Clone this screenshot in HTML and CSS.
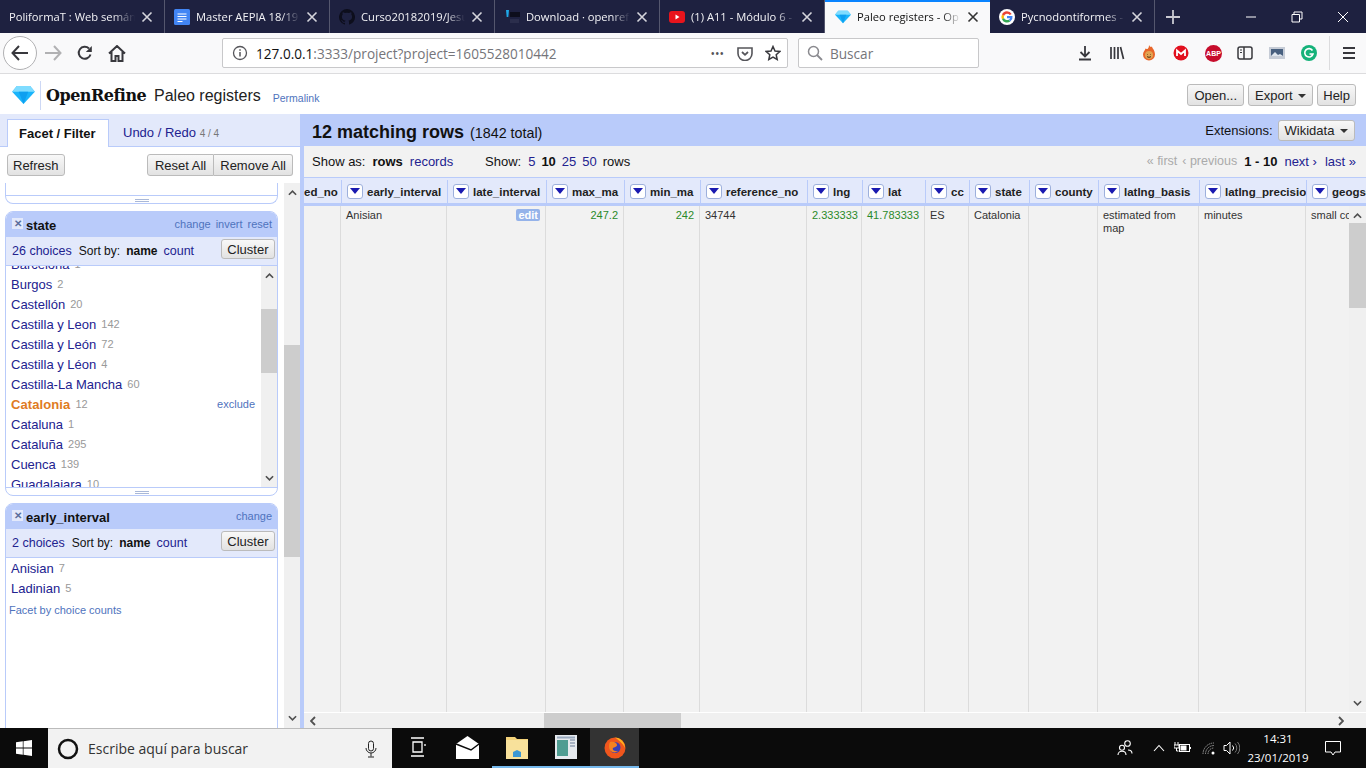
FILE: index.html
```html
<!DOCTYPE html>
<html lang="es">
<head>
    <meta charset="UTF-8">
    <title>Paleo registers - OpenRefine</title>
    <link rel="stylesheet" href="styles.css">
</head>
<body>
    <svg class="defs" width="0" height="0">
        <symbol id="gem" viewBox="0 0 24 19">
            <polygon points="5,0 19,0 24,6 12,19 0,6" fill="#19b4fb"/>
            <polygon points="5,0 19,0 24,6 0,6" fill="#7fdcff"/>
            <polygon points="7,6 17,6 12,19" fill="#0e9ff0"/>
        </symbol>
        <symbol id="x" viewBox="0 0 12 12">
            <path d="M1.5 1.5l9 9M10.5 1.5l-9 9" fill="none" stroke="currentColor" stroke-width="1.6"/>
        </symbol>
        <symbol id="up" viewBox="0 0 10 6">
            <path d="M1 5l4-4 4 4" fill="none" stroke="#505050" stroke-width="1.8"/>
        </symbol>
        <symbol id="down" viewBox="0 0 10 6">
            <path d="M1 1l4 4 4-4" fill="none" stroke="#505050" stroke-width="1.8"/>
        </symbol>
    </svg>

    <!-- firefox tabs -->
    <div class="tabstrip">
        <div class="tab">
            <span class="tab-title">PoliformaT : Web semán</span>
            <svg class="tab-close"><use href="#x"/></svg>
        </div>
        <div class="tab">
            <svg class="favicon" viewBox="0 0 16 16"><rect width="16" height="16" rx="1.5" fill="#4285f4"/><path d="M3.5 5h9M3.5 7.5h9M3.5 10h9M3.5 12.5h5" stroke="#fff" stroke-width="1"/></svg>
            <span class="tab-title">Master AEPIA 18/19</span>
            <svg class="tab-close"><use href="#x"/></svg>
        </div>
        <div class="tab">
            <svg class="favicon" viewBox="0 0 16 16"><path fill="#0d0e1c" d="M8 0a8 8 0 0 0-2.5 15.6c.4.1.5-.2.5-.4v-1.4c-2.2.5-2.7-1-2.7-1-.4-.9-.9-1.200-.9-1.200-.7-.5.100-.5.100-.5.800.1 1.200.8 1.200.8.700 1.200 1.900.9 2.300.7.100-.5.300-.9.500-1.100-1.800-.2-3.600-.9-3.600-4 0-.9.300-1.600.800-2.100-.1-.2-.4-1 .1-2.100 0 0 .7-.2 2.200.8a7.600 7.600 0 0 1 4 0c1.500-1 2.200-.8 2.200-.8.500 1.100.200 1.900.100 2.100.500.500.800 1.200.800 2.100 0 3.100-1.900 3.800-3.700 4 .3.300.600.700.600 1.500v2.200c0 .2.100.5.500.4A8 8 0 0 0 8 0z"/></svg>
            <span class="tab-title">Curso20182019/Jesú</span>
            <svg class="tab-close"><use href="#x"/></svg>
        </div>
        <div class="tab">
            <svg class="favicon" viewBox="0 0 16 16"><path d="M2 1h3l-.7 7H2.700z" fill="#1fa8e8"/><rect x="6" y="3" width="10" height="5" fill="#0d0e1c"/><rect x="6" y="10" width="9" height="4" fill="#2b2e4c"/></svg>
            <span class="tab-title">Download · openrefi</span>
            <svg class="tab-close"><use href="#x"/></svg>
        </div>
        <div class="tab">
            <svg class="favicon" viewBox="0 0 16 16"><rect y="2" width="16" height="12" rx="3" fill="#e8141c"/><path d="M6.500 5.500v5l4-2.500z" fill="#fff"/></svg>
            <span class="tab-title">(1) A11 - Módulo 6 -</span>
            <svg class="tab-close"><use href="#x"/></svg>
        </div>
        <div class="tab tab-active">
            <svg class="favicon"><use href="#gem"/></svg>
            <span class="tab-title">Paleo registers - Op</span>
            <svg class="tab-close"><use href="#x"/></svg>
        </div>
        <div class="tab">
            <svg class="favicon" viewBox="0 0 16 16"><circle cx="8" cy="8" r="8" fill="#fff"/><path d="M12.700 5A5.500 5.500 0 0 0 3 5.500l2 1.500A3.300 3.300 0 0 1 10.700 6z" fill="#ea4335"/><path d="M3 5.500a5.500 5.500 0 0 0 0 5l2-1.500a3.300 3.300 0 0 1 0-2z" fill="#fbbc05"/><path d="M3 10.500a5.500 5.500 0 0 0 8.500 1.700l-1.900-1.500A3.300 3.300 0 0 1 5 9z" fill="#34a853"/><path d="M13.500 7H8v2.200h3.100a2.800 2.800 0 0 1-1.500 1.500l1.900 1.500A5.500 5.500 0 0 0 13.500 7z" fill="#4285f4"/></svg>
            <span class="tab-title">Pycnodontiformes -</span>
            <svg class="tab-close"><use href="#x"/></svg>
        </div>
        <div class="tab-new">
            <svg width="16" height="16" viewBox="0 0 16 16"><path d="M8 1v14M1 8h14" stroke="#c9c9d2" stroke-width="1.800"/></svg>
        </div>
        <div class="window-controls">
            <svg width="12" height="12" viewBox="0 0 12 12"><path d="M1 6h10" stroke="#fff"/></svg>
            <svg width="12" height="12" viewBox="0 0 12 12"><path d="M3 3V1h8v7H9M1 3.500h7.500V11H1z" fill="none" stroke="#fff"/></svg>
            <svg width="12" height="12" viewBox="0 0 12 12"><path d="M1 1l10 10M11 1L1 11" stroke="#fff"/></svg>
        </div>
    </div>

    <!-- firefox toolbar -->
    <div class="toolbar">
        <div class="nav-back">
            <svg width="18" height="16" viewBox="0 0 18 16"><path d="M8 1L1.500 8 8 15M2 8h15" fill="none" stroke="#38383d" stroke-width="2"/></svg>
        </div>
        <svg class="nav-icon nav-forward" width="18" height="16" viewBox="0 0 18 16"><path d="M10 1l6.500 7L10 15M16 8H1" fill="none" stroke="#b1b1b3" stroke-width="2"/></svg>
        <svg class="nav-icon nav-reload" width="16" height="16" viewBox="0 0 16 16"><path d="M13.500 9.500A6 6 0 1 1 12 3.500" fill="none" stroke="#38383d" stroke-width="2"/><path d="M14.800 1v6h-6z" fill="#38383d"/></svg>
        <svg class="nav-icon" width="18" height="17" viewBox="0 0 18 17"><path d="M1 8.500L9 1l8 7.500M3.500 7v9h4v-5h3v5h4V7" fill="none" stroke="#38383d" stroke-width="2"/></svg>

        <div class="urlbar">
            <svg width="16" height="16" viewBox="0 0 16 16"><circle cx="8" cy="8" r="6.500" fill="none" stroke="#55555a" stroke-width="1.300"/><path d="M8 7v4.500M8 4.200v1.500" stroke="#55555a" stroke-width="1.500"/></svg>
            <div class="url"><span class="url-host">127.0.0.1</span>:3333/project?project=1605528010442</div>
            <span class="url-dots">•••</span>
            <svg class="url-pocket" width="16" height="15" viewBox="0 0 16 15"><path d="M1 2h14v5.500a7 7 0 0 1-14 0z" fill="none" stroke="#55555a" stroke-width="1.600"/><path d="M5 6l3 2.800L11 6" fill="none" stroke="#55555a" stroke-width="1.800"/></svg>
            <svg width="16" height="16" viewBox="0 0 16 16"><path d="M8 1.500l2 4.500 4.800.500-3.600 3.200 1 4.800L8 12.100l-4.200 2.400 1-4.800L1.200 6.500 6 6z" fill="none" stroke="#38383d" stroke-width="1.500"/></svg>
        </div>
        <div class="searchbar">
            <svg width="16" height="16" viewBox="0 0 16 16"><circle cx="6.500" cy="6.500" r="5" fill="none" stroke="#8a8a8f" stroke-width="1.500"/><path d="M10 10l5 5" stroke="#8a8a8f" stroke-width="1.800"/></svg>
            <span>Buscar</span>
        </div>

        <div class="toolbar-icons">
            <svg width="16" height="16" viewBox="0 0 16 16"><path d="M8 1v10M3.500 7L8 11.500 12.500 7M2 14.500h12" fill="none" stroke="#38383d" stroke-width="1.800"/></svg>
            <svg width="16" height="16" viewBox="0 0 16 16"><path d="M2 2v12M5.500 2v12M9 2v12M11.500 2l3 12" fill="none" stroke="#38383d" stroke-width="1.700"/></svg>
            <svg width="16" height="16" viewBox="0 0 16 16"><path d="M8 0c1 2 2 2.500 3 1.500.2 2 3 3.500 3 8a6 6 0 0 1-12 0c0-3 2-3.500 2.500-6C5.500 4 6 4 6.500 4 7.500 3 8 2 8 0z" fill="#e8662a"/><circle cx="8" cy="10" r="4" fill="#e2a452"/><path d="M6 9.500h.5M9.500 9.500h.5M6 11.500c1 1 3 1 4 0" stroke="#4a2a10" fill="none"/></svg>
            <svg width="16" height="16" viewBox="0 0 16 16"><circle cx="8" cy="8" r="7.500" fill="#e2101e"/><path d="M4 11V5.500l4 3.500 4-3.500V11" fill="none" stroke="#fff" stroke-width="1.800"/></svg>
            <div class="abp">ABP</div>
            <svg width="16" height="16" viewBox="0 0 16 16"><rect x="1" y="2" width="14" height="12" rx="2" fill="none" stroke="#38383d" stroke-width="1.500"/><path d="M7 2v12" stroke="#38383d" stroke-width="1.500"/><path d="M3 5h2M3 7.500h2" stroke="#38383d"/></svg>
            <svg width="16" height="14" viewBox="0 0 16 14"><rect width="16" height="12" y="1" fill="#c6ccd6"/><rect x="2" y="3" width="12" height="7" fill="#48607f"/><path d="M2 10l4-4 3 3 2-1 3 2z" fill="#dfe6ee"/></svg>
            <svg width="16" height="16" viewBox="0 0 16 16"><circle cx="8" cy="8" r="8" fill="#15b27a"/><path d="M11.500 5.500A4.200 4.200 0 1 0 12 9H8.500" fill="none" stroke="#fff" stroke-width="1.600"/></svg>
            <span class="toolbar-sep"></span>
            <svg width="14" height="14" viewBox="0 0 14 14"><path d="M1 2h12M1 7h12M1 12h12" stroke="#38383d" stroke-width="1.800"/></svg>
        </div>
    </div>

    <!-- openrefine header -->
    <div class="app-header">
        <svg class="app-logo"><use href="#gem"/></svg>
        <div class="app-name">OpenRefine</div>
        <div class="project-name">Paleo registers</div>
        <a class="permalink">Permalink</a>
        <div class="header-buttons">
            <button class="btn">Open...</button>
            <button class="btn">Export <span class="caret"></span></button>
            <button class="btn btn-help">Help</button>
        </div>
    </div>

    <div class="workspace">
        <!-- left panel -->
        <div class="left-panel">
            <div class="left-tabs">
                <div class="left-tab active">Facet / Filter</div>
                <div class="left-tab"><a>Undo / Redo</a> <span class="tab-count">4 / 4</span></div>
            </div>
            <div class="facet-controls">
                <button class="btn btn-refresh">Refresh</button>
                <div class="btn-group">
                    <button class="btn">Reset All</button>
                    <button class="btn">Remove All</button>
                </div>
            </div>
            <div class="facet-area">
                <div class="facet-list">
                    <div class="facet-stub">
                        <div class="facet-grip"></div>
                    </div>

                    <div class="facet">
                        <div class="facet-title">
                            <span class="facet-remove">✕</span>
                            <span class="facet-name">state</span>
                            <span class="facet-actions"><a>change</a><a>invert</a><a>reset</a></span>
                        </div>
                        <div class="facet-sort">
                            <a>26 choices</a><span>Sort by:</span><b>name</b><a>count</a>
                            <button class="btn btn-cluster">Cluster</button>
                        </div>
                        <div class="facet-body state-body">
                            <div class="choices state-choices">
                                <div class="choice"><a>Barcelona</a><span>1</span></div>
                                <div class="choice"><a>Burgos</a><span>2</span></div>
                                <div class="choice"><a>Castellón</a><span>20</span></div>
                                <div class="choice"><a>Castilla y Leon</a><span>142</span></div>
                                <div class="choice"><a>Castilla y León</a><span>72</span></div>
                                <div class="choice"><a>Castilla y Léon</a><span>4</span></div>
                                <div class="choice"><a>Castilla-La Mancha</a><span>60</span></div>
                                <div class="choice selected"><a>Catalonia</a><span>12</span><a class="exclude">exclude</a></div>
                                <div class="choice"><a>Cataluna</a><span>1</span></div>
                                <div class="choice"><a>Cataluña</a><span>295</span></div>
                                <div class="choice"><a>Cuenca</a><span>139</span></div>
                                <div class="choice"><a>Guadalajara</a><span>10</span></div>
                            </div>
                            <div class="scrollbar state-scroll">
                                <svg class="sb-arrow"><use href="#up"/></svg>
                                <div class="sb-thumb"></div>
                                <svg class="sb-arrow"><use href="#down"/></svg>
                            </div>
                        </div>
                        <div class="facet-grip"></div>
                    </div>

                    <div class="facet">
                        <div class="facet-title">
                            <span class="facet-remove">✕</span>
                            <span class="facet-name">early_interval</span>
                            <span class="facet-actions"><a>change</a></span>
                        </div>
                        <div class="facet-sort">
                            <a>2 choices</a><span>Sort by:</span><b>name</b><a>count</a>
                            <button class="btn btn-cluster">Cluster</button>
                        </div>
                        <div class="facet-body early-body">
                            <div class="choices">
                                <div class="choice"><a>Anisian</a><span>7</span></div>
                                <div class="choice"><a>Ladinian</a><span>5</span></div>
                                <a class="facet-counts">Facet by choice counts</a>
                            </div>
                        </div>
                    </div>
                </div>
                <div class="scrollbar main-scroll">
                    <svg class="sb-arrow"><use href="#up"/></svg>
                    <div class="sb-thumb"></div>
                    <svg class="sb-arrow"><use href="#down"/></svg>
                </div>
            </div>
        </div>

        <!-- right panel -->
        <div class="view-panel">
            <div class="summary-bar">
                <div class="summary"><b>12 matching rows</b> (1842 total)</div>
                <div class="extensions">Extensions: <button class="btn">Wikidata <span class="caret"></span></button></div>
            </div>
            <div class="view-controls">
                <div class="show-as"><span>Show as:</span><b>rows</b><a>records</a></div>
                <div class="show-count"><span class="show-label">Show:</span><a>5</a><b>10</b><a>25</a><a>50</a><span>rows</span></div>
                <div class="pager">
                    <span class="off first">« first</span>
                    <span class="off">‹ previous</span>
                    <b>1 - 10</b>
                    <a>next ›</a>
                    <a class="last">last »</a>
                </div>
            </div>
            <div class="grid-head">
                <div class="col col-clip">ed_no</div>
                <div class="col"><i class="col-btn"></i>early_interval</div>
                <div class="col"><i class="col-btn"></i>late_interval</div>
                <div class="col"><i class="col-btn"></i>max_ma</div>
                <div class="col"><i class="col-btn"></i>min_ma</div>
                <div class="col"><i class="col-btn"></i>reference_no</div>
                <div class="col"><i class="col-btn"></i>lng</div>
                <div class="col"><i class="col-btn"></i>lat</div>
                <div class="col"><i class="col-btn"></i>cc</div>
                <div class="col"><i class="col-btn"></i>state</div>
                <div class="col"><i class="col-btn"></i>county</div>
                <div class="col"><i class="col-btn"></i>latlng_basis</div>
                <div class="col"><i class="col-btn"></i>latlng_precision</div>
                <div class="col"><i class="col-btn"></i>geogscale</div>
            </div>
            <div class="grid-wrap">
                <div class="grid-body">
                    <div class="cell"></div>
                    <div class="cell">Anisian</div>
                    <div class="cell cell-edit"><span class="edit-badge">edit</span></div>
                    <div class="cell num">247.2</div>
                    <div class="cell num">242</div>
                    <div class="cell">34744</div>
                    <div class="cell num">2.333333</div>
                    <div class="cell num">41.783333</div>
                    <div class="cell">ES</div>
                    <div class="cell">Catalonia</div>
                    <div class="cell"></div>
                    <div class="cell">estimated from map</div>
                    <div class="cell">minutes</div>
                    <div class="cell">small collection</div>
                </div>
                <div class="scrollbar grid-scroll">
                    <svg class="sb-arrow"><use href="#up"/></svg>
                    <div class="sb-thumb"></div>
                    <svg class="sb-arrow"><use href="#down"/></svg>
                </div>
            </div>
            <div class="hscroll">
                <svg class="sb-arrow-h" viewBox="0 0 6 10"><path d="M5 1L1 5l4 4" fill="none" stroke="#505050" stroke-width="1.800"/></svg>
                <div class="hscroll-thumb"></div>
                <svg class="sb-arrow-h" viewBox="0 0 6 10"><path d="M1 1l4 4-4 4" fill="none" stroke="#505050" stroke-width="1.800"/></svg>
            </div>
        </div>
    </div>

    <!-- windows taskbar -->
    <div class="taskbar">
        <div class="start">
            <svg width="16" height="16" viewBox="0 0 16 16"><path fill="#fff" d="M0 2.300l6.800-1v6.300H0zM7.500 1.200L16 0v7.600H7.500zM0 8.400h6.800v6.300l-6.800-1zM7.500 8.400H16V16l-8.500-1.200z"/></svg>
        </div>
        <div class="task-search">
            <svg width="22" height="22" viewBox="0 0 22 22"><circle cx="11" cy="11" r="9" fill="none" stroke="#111" stroke-width="2.500"/></svg>
            <span class="task-search-text">Escribe aquí para buscar</span>
            <svg width="12" height="18" viewBox="0 0 12 18"><rect x="3.500" y="1" width="5" height="10" rx="2.500" fill="none" stroke="#222"/><path d="M1 8a5 5 0 0 0 10 0M6 13v3.500M3 17h6" fill="none" stroke="#222"/></svg>
        </div>
        <div class="task-apps">
            <div class="task-app">
                <svg width="16" height="20" viewBox="0 0 16 20"><path d="M1 1h13M1 19h13M3 5h9v10H3zM15 7v2" fill="none" stroke="#fff" stroke-width="1.300"/></svg>
            </div>
            <div class="task-app">
                <svg width="25" height="25" viewBox="0 0 25 25"><path d="M1 9l11.500-8L24 9v15H1z" fill="#fff"/><path d="M1 9l15 6 8-6" fill="none" stroke="#0b0b0b" stroke-width="1.500"/></svg>
            </div>
            <div class="task-app running">
                <svg width="22" height="24" viewBox="0 0 22 24"><path d="M0 2h9l2 2h11v20H0z" fill="#f3d27a"/><rect x="0" y="5" width="22" height="19" fill="#f8e19b"/><path d="M7 22v-5l4-2 4 2v5z" fill="#3b97d3"/></svg>
            </div>
            <div class="task-app running">
                <svg width="22" height="24" viewBox="0 0 22 24"><rect width="22" height="24" fill="#e6eaee"/><rect x="2" y="5" width="11" height="16" fill="#4f9d92"/><path d="M15 5h5M15 8h5M15 11h5" stroke="#6a7d99"/><rect x="2" y="1.500" width="18" height="2" fill="#98a8bd"/></svg>
            </div>
            <div class="task-app running current">
                <svg width="24" height="24" viewBox="0 0 24 24"><circle cx="12" cy="13" r="10.500" fill="#f0561d"/><path d="M12 2.500c5 0 10 4.500 10 10.500-2-4-4-6-10-10.500z" fill="#ffb21d"/><circle cx="12" cy="12.500" r="5.500" fill="#3a3fb6"/><path d="M7 7c4-1 7 1 7 3s-3 2-4 3 1 4 5 3c-3 3-9 1-9-4 0-2 0-3 1-5z" fill="#f58220"/></svg>
            </div>
        </div>
        <div class="tray">
            <svg class="tray-people" width="16" height="16" viewBox="0 0 16 16"><circle cx="10.500" cy="3.500" r="2.800" fill="none" stroke="#fff" stroke-width="1.100"/><circle cx="5" cy="7.800" r="2.500" fill="none" stroke="#fff" stroke-width="1.100"/><path d="M1 15c0-5 8-5 8 0M11 10c2 0 4 1 4 3.500" fill="none" stroke="#fff" stroke-width="1.100"/></svg>
            <svg class="tray-chevron" width="12" height="8" viewBox="0 0 12 8"><path d="M1 7l5-5.500L11 7" fill="none" stroke="#fff" stroke-width="1.100"/></svg>
            <svg class="tray-battery" width="17" height="12" viewBox="0 0 17 12"><path d="M1 0v3M4 0v3M0 3h5v3H0zM2.500 6v3h2" fill="none" stroke="#fff"/><rect x="5.500" y="2.500" width="10" height="7" fill="none" stroke="#fff"/><rect x="6.500" y="3.500" width="6" height="5" fill="#fff"/><path d="M16.500 5v2" stroke="#fff"/></svg>
            <svg class="tray-wifi" width="13" height="13" viewBox="0 0 13 13"><path d="M1 12A11 11 0 0 1 12 1M3.500 12A8.500 8.500 0 0 1 12 3.500M6 12A6 6 0 0 1 12 6" fill="none" stroke="#999" stroke-dasharray="1.500 .8"/><circle cx="11" cy="11" r="1.500" fill="#fff"/></svg>
            <svg class="tray-sound" width="17" height="14" viewBox="0 0 17 14"><path d="M1 4.500h2.500L7 1v12L3.500 9.500H1z" fill="none" stroke="#fff"/><path d="M9.500 4.500a3.500 3.500 0 0 1 0 5" fill="none" stroke="#fff"/><path d="M12 2.500a6.500 6.500 0 0 1 0 9M14.500 1a9 9 0 0 1 0 12" fill="none" stroke="#777"/></svg>
            <div class="clock"><div>14:31</div><div>23/01/2019</div></div>
            <svg class="tray-notes" width="16" height="15" viewBox="0 0 16 15"><path d="M.5.500h15V11H10l-2 3-2-3H.5z" fill="none" stroke="#fff"/></svg>
        </div>
    </div>
</body>
</html>
```

FILE: styles.css
```css
:root {
    --strip: #1e2140;
    --blue: #b9cbfa;
    --blue-light: #e3e9fb;
    --link: #22228f;
    --link-light: #4f73bd;
    --track: #f0f0f0;
    --thumb: #cdcdcd;
    --col-line: #dcdcdc;
}

* {
    box-sizing: border-box;
    margin: 0;
    padding: 0;
}

html, body {
    width: 1366px;
    height: 768px;
    overflow: hidden;
}

body {
    display: flex;
    flex-direction: column;
    background: #fff;
    font-family: "Liberation Sans", Arial, sans-serif;
    font-size: 13px;
    color: #111;
}

.defs {
    position: absolute;
}

a {
    color: var(--link);
}

/* tabs */
.tabstrip {
    display: flex;
    height: 33px;
    flex: none;
    background: var(--strip);
    font-family: "Open Sans", sans-serif;
    font-size: 11.2px;
    color: #f2f2f5;
}

.tab {
    width: 165px;
    display: flex;
    align-items: center;
    padding: 0 11px 0 9px;
    gap: 6px;
    flex: none;
    border-right: 1px solid #55576e;
}

.tab-active {
    background: #f9f9fa;
    color: #111;
    border-right: none;
    border-top: 2px solid #0a84ff;
    padding: 0 11px 2px 10px;
}

.tab-title {
    flex: 1;
    min-width: 0;
    white-space: nowrap;
    overflow: hidden;
    -webkit-mask-image: linear-gradient(90deg, #000 82%, transparent 100%);
    mask-image: linear-gradient(90deg, #000 82%, transparent 100%);
}

.favicon {
    width: 16px;
    height: 16px;
    flex: none;
}

.tab-close {
    width: 12px;
    height: 12px;
    flex: none;
    color: #d5d5dc;
}

.tab-active .tab-close {
    color: #333;
}

.tab-new {
    width: 35px;
    display: flex;
    align-items: center;
    justify-content: center;
    flex: none;
}

.window-controls {
    margin-left: auto;
    display: flex;
    align-items: center;
    gap: 34px;
    padding-right: 17px;
}

/* toolbar */
.toolbar {
    height: 41px;
    flex: none;
    display: flex;
    align-items: center;
    background: #f9f9fa;
    border-bottom: 1px solid #dcdcde;
    padding-left: 3px;
    font-family: "Open Sans", sans-serif;
}

.nav-back {
    width: 34px;
    height: 34px;
    border-radius: 50%;
    border: 1px solid #b1b1b3;
    background: #fff;
    display: flex;
    align-items: center;
    justify-content: center;
    flex: none;
    margin-right: 7px;
}

.nav-icon {
    flex: none;
}

.nav-forward {
    margin-right: 15px;
}

.nav-reload {
    margin-right: 15px;
}

.urlbar {
    width: 566px;
    height: 30px;
    margin-left: 96px;
    background: #fff;
    border: 1px solid #c8c8ca;
    border-radius: 2px;
    display: flex;
    align-items: center;
    gap: 8px;
    padding: 0 6px 0 9px;
    flex: none;
}

.url {
    flex: 1;
    font-size: 13.6px;
    color: #75757a;
    white-space: nowrap;
}

.url-host {
    color: #111;
}

.url-dots {
    font-size: 12px;
    color: #55555a;
    margin-right: 5px;
}

.url-pocket {
    margin-right: 4px;
}

.searchbar {
    width: 181px;
    height: 30px;
    margin-left: 10px;
    background: #fff;
    border: 1px solid #c8c8ca;
    border-radius: 2px;
    display: flex;
    align-items: center;
    gap: 7px;
    padding-left: 8px;
    font-size: 13.6px;
    color: #75757a;
    flex: none;
}

.toolbar-icons {
    flex: 1;
    display: flex;
    align-items: center;
    gap: 16px;
    padding-left: 98px;
}

.abp {
    width: 17px;
    height: 17px;
    margin-right: -1px;
    border-radius: 50%;
    background: #c70d2c;
    color: #fff;
    font: bold 7px/17px "Liberation Sans", sans-serif;
    text-align: center;
    flex: none;
}

.toolbar-sep {
    width: 1px;
    height: 34px;
    background: #dcdcde;
    margin-left: -4px;
    margin-right: -4px;
}

/* openrefine header */
.app-header {
    height: 40px;
    flex: none;
    display: flex;
    align-items: center;
    padding: 2px 0 0 12px;
    background: #fff;
}

.app-logo {
    width: 23px;
    height: 18px;
    margin-right: 5px;
}

.app-name {
    font-family: "DejaVu Serif", serif;
    font-weight: bold;
    font-size: 16px;
    letter-spacing: -0.5px;
    border-left: 1px solid #cdd8f5;
    padding: 5px 0 5px 5px;
    color: #111;
    width: 114px;
}

.project-name {
    font-size: 16px;
    color: #222;
    margin-top: 2px;
}

.permalink {
    font-size: 10.5px;
    margin-left: 12px;
    margin-top: 5px;
    color: var(--link-light);
}

.header-buttons {
    margin-left: auto;
    display: flex;
    gap: 4px;
    padding-right: 10px;
}

.btn {
    height: 22px;
    padding: 0 6px;
    font: 13px "Liberation Sans", Arial, sans-serif;
    color: #222;
    background: linear-gradient(#f8f8f8, #e2e2e2);
    border: 1px solid #bbb;
    border-radius: 3px;
    white-space: nowrap;
}

.btn-help {
    padding: 0 5px;
}

.caret {
    display: inline-block;
    border: 4px solid transparent;
    border-top-color: #333;
    border-bottom: none;
    vertical-align: middle;
    margin-left: 2px;
}

/* layout */
.workspace {
    flex: 1;
    min-height: 0;
    display: flex;
}

.left-panel {
    width: 300px;
    flex: none;
    display: flex;
    flex-direction: column;
}

.left-tabs {
    height: 33px;
    flex: none;
    background: var(--blue-light);
    border-bottom: 1px solid var(--blue);
    display: flex;
    align-items: flex-end;
    padding-left: 7px;
}

.left-tab {
    height: 27px;
    padding: 6px 14px 0 14px;
    font-size: 13px;
}

.left-tab.active {
    width: 102px;
    padding: 6px 0 0 11px;
    font-weight: bold;
    background: #fff;
    border: 1px solid var(--blue);
    border-bottom: none;
    height: 28px;
    margin-bottom: -1px;
}

.tab-count {
    font-size: 10px;
    color: #777;
}

.facet-controls {
    height: 36px;
    flex: none;
    display: flex;
    justify-content: space-between;
    align-items: flex-start;
    padding: 7px 7px 0 7px;
}

.btn-refresh {
    padding: 0 5px;
}

.btn-group {
    display: flex;
}

.btn-group .btn {
    padding: 0 7px;
    border-radius: 3px 0 0 3px;
}

.btn-group .btn + .btn {
    padding: 0 6px;
    border-left: none;
    border-radius: 0 3px 3px 0;
}

.facet-area {
    flex: 1;
    min-height: 0;
    display: flex;
}

.facet-list {
    flex: 1;
    min-width: 0;
    padding-left: 5px;
    padding-right: 6px;
    overflow: hidden;
}

.facet-stub {
    height: 21px;
    padding-top: 12px;
    border: 1px solid var(--blue);
    border-top: none;
    border-radius: 0 0 8px 8px;
    margin-bottom: 7px;
}

.facet-grip {
    height: 8px;
    border-top: 1px solid var(--blue);
    background: linear-gradient(#a9b8d8, #a9b8d8) center 3px / 14px 1px no-repeat,
                linear-gradient(#a9b8d8, #a9b8d8) center 5px / 14px 1px no-repeat;
}

.facet {
    border: 1px solid var(--blue);
    border-radius: 8px;
    margin-bottom: 7px;
    overflow: hidden;
}

.facet-title {
    height: 25px;
    background: var(--blue);
    display: flex;
    align-items: center;
    padding: 2px 5px 0 6px;
}

.facet-remove {
    width: 11px;
    height: 11px;
    background: #e3e9fb;
    color: #5c6f9e;
    font-size: 10px;
    font-weight: bold;
    line-height: 11px;
    text-align: center;
    margin-top: -5px;
    margin-right: 3px;
}

.facet-name {
    font-weight: bold;
    font-size: 13px;
}

.facet-actions {
    margin-left: auto;
    display: flex;
    gap: 5px;
    margin-top: -4px;
    font-size: 11px;
}

.facet-actions a {
    color: var(--link-light);
}

.facet-sort {
    height: 29px;
    background: var(--blue-light);
    border-bottom: 1px solid var(--blue);
    display: flex;
    align-items: center;
    padding: 0 2px 0 6px;
    font-size: 12px;
}

.facet-sort a {
    font-size: 12.5px;
}

.facet-sort span {
    margin-left: 7px;
}

.facet-sort b {
    margin-left: 6px;
}

.facet-sort a:last-of-type {
    margin-left: 6px;
}

.btn-cluster {
    margin-left: auto;
    margin-top: -4px;
    height: 20px;
    padding: 0 5.5px;
}

.facet-body {
    display: flex;
    overflow: hidden;
    background: #fff;
}

.state-body {
    height: 221px;
}

.early-body {
    height: 200px;
}

.choices {
    flex: 1;
    min-width: 0;
    padding-left: 5px;
}

.state-choices {
    margin-top: -12px;
    padding-right: 6px;
}

.choice {
    height: 20px;
    display: flex;
    align-items: center;
    gap: 5px;
    font-size: 13px;
    white-space: nowrap;
}

.choice span {
    font-size: 11px;
    color: #999;
}

.choice.selected a:first-child {
    color: #e07b22;
    font-weight: bold;
    letter-spacing: 0.1px;
}

.exclude {
    margin-left: auto;
    font-size: 11px;
    color: var(--link-light);
}

.facet-counts {
    display: block;
    font-size: 11px;
    margin: 6px 0 0 -2px;
    color: var(--link-light);
}

/* scrollbars */
.scrollbar {
    flex: none;
    background: var(--track);
    display: flex;
    flex-direction: column;
    align-items: center;
}

.sb-arrow {
    width: 9px;
    height: 6px;
    flex: none;
}

.sb-thumb {
    width: 100%;
    background: var(--thumb);
}

.state-scroll {
    width: 16px;
}

.state-scroll .sb-arrow:first-child {
    margin-top: 7px;
}

.state-scroll .sb-thumb {
    margin-top: 30px;
    height: 64px;
}

.state-scroll .sb-arrow:last-child {
    margin-top: auto;
    margin-bottom: 6px;
}

.main-scroll {
    width: 16px;
}

.main-scroll .sb-arrow:first-child {
    margin-top: 7px;
}

.main-scroll .sb-thumb {
    margin-top: 149px;
    height: 212px;
}

.main-scroll .sb-arrow:last-child {
    margin-top: auto;
    margin-bottom: 7px;
}

/* right side */
.view-panel {
    flex: 1;
    min-width: 0;
    display: flex;
    flex-direction: column;
    border-left: 4px solid var(--blue);
    background: #f2f2f2;
}

.summary-bar {
    height: 32px;
    flex: none;
    background: var(--blue);
    margin-left: -4px;
    display: flex;
    align-items: center;
    justify-content: space-between;
    padding: 0 11px 0 12px;
}

.summary {
    font-size: 14.3px;
    margin-top: 4px;
}

.summary b {
    font-size: 18px;
    margin-right: 2px;
}

.extensions {
    display: flex;
    align-items: center;
    gap: 5px;
    font-size: 13px;
}

.extensions .btn {
    height: 21px;
}

.view-controls {
    height: 31px;
    flex: none;
    display: flex;
    align-items: center;
    padding: 0 10px 0 8px;
    font-size: 13px;
}

.show-as {
    width: 173px;
    display: flex;
    gap: 7px;
}

.show-count {
    display: flex;
    gap: 6px;
}

.show-label {
    margin-right: 1px;
}

.pager {
    margin-left: auto;
    display: flex;
    gap: 7px;
}

.pager .off {
    font-size: 12.5px;
    color: #aaa;
}

.pager .first {
    margin-right: -2px;
}

.pager .last {
    margin-left: 1px;
}

.grid-head,
.grid-body {
    display: grid;
    grid-template-columns: 38px 106px 99px 78px 76px 107px 55px 63px 44px 60px 69px 101px 107px 59px;
}

.grid-head {
    height: 29px;
    flex: none;
    padding-top: 2px;
    background: var(--blue-light);
    border-top: 1px solid var(--blue);
    border-bottom: 3px solid var(--blue);
}

.col {
    display: flex;
    align-items: center;
    gap: 4px;
    padding-left: 5px;
    font-size: 11.5px;
    font-weight: bold;
    white-space: nowrap;
    overflow: hidden;
    border-right: 1px solid var(--blue);
    color: #222;
}

.col-clip {
    padding-left: 0;
}

.col:last-child {
    border-right: none;
}

.col-btn {
    width: 16px;
    height: 15px;
    flex: none;
    border: 1px solid #9db0dc;
    border-radius: 3px;
    background: #fff;
    position: relative;
}

.col-btn::after {
    content: "";
    position: absolute;
    left: 2px;
    top: 3px;
    border: 5px solid transparent;
    border-top: 6px solid #1a1ab0;
    border-bottom: none;
}

.grid-wrap {
    flex: 1;
    min-height: 0;
    display: flex;
}

.grid-body {
    flex: 1;
    min-width: 0;
    overflow: hidden;
    margin-left: -1px;
}

.cell {
    padding: 3px 5px;
    font-size: 11px;
    line-height: 13px;
    color: #333;
    border-right: 1px solid var(--col-line);
    overflow: hidden;
}

.cell:last-child {
    border-right: none;
    white-space: nowrap;
}

.cell.num {
    text-align: right;
    color: #2a8a2a;
}

.cell-edit {
    text-align: right;
}

.edit-badge {
    display: inline-block;
    padding: 0 2px;
    background: #95b3ea;
    color: #fff;
    font-weight: bold;
    font-size: 11px;
    line-height: 12px;
    border-radius: 2px;
}

.grid-scroll {
    width: 17px;
}

.grid-scroll .sb-arrow:first-child {
    margin-top: 7px;
}

.grid-scroll .sb-thumb {
    margin-top: 4px;
    height: 85px;
}

.grid-scroll .sb-arrow:last-child {
    margin-top: auto;
    margin-bottom: 6px;
}

.hscroll {
    height: 16px;
    flex: none;
    background: var(--track);
    border-top: 1px solid #fff;
    display: flex;
    align-items: center;
    padding-left: 6px;
    padding-right: 22px;
}

.sb-arrow-h {
    width: 6px;
    height: 10px;
    flex: none;
}

.hscroll-thumb {
    width: 137px;
    height: 100%;
    margin-left: 228px;
    margin-right: auto;
    background: var(--thumb);
}

/* taskbar */
.taskbar {
    height: 40px;
    flex: none;
    display: flex;
    background: #0b0b0b;
    color: #fff;
    font-family: "Open Sans", sans-serif;
}

.start {
    width: 48px;
    display: flex;
    align-items: center;
    justify-content: center;
    flex: none;
}

.task-search {
    width: 344px;
    flex: none;
    display: flex;
    align-items: center;
    gap: 9px;
    padding: 0 15px 0 9px;
    background: #f2f2f2;
    border-top: 1px solid #bbb;
    color: #333;
    font-size: 14px;
}

.task-search-text {
    flex: 1;
}

.task-apps {
    display: flex;
}

.task-app {
    width: 49px;
    display: flex;
    align-items: center;
    justify-content: center;
    border-bottom: 2px solid transparent;
}

.task-app:first-child {
    width: 51px;
}

.task-app.running {
    border-bottom-color: #76b9ed;
}

.task-app.current {
    background: #333;
}

.tray {
    flex: 1;
    display: flex;
    align-items: center;
}

.tray-people {
    margin-left: 478px;
}

.tray-chevron {
    margin-left: 20px;
}

.tray-battery {
    margin-left: 9px;
}

.tray-wifi {
    margin-left: 11px;
}

.tray-sound {
    margin-left: 8px;
}

.clock {
    width: 66px;
    margin-left: 5px;
    text-align: center;
    font-size: 11.5px;
    line-height: 19px;
}

.tray-notes {
    margin-left: 14px;
}
```
